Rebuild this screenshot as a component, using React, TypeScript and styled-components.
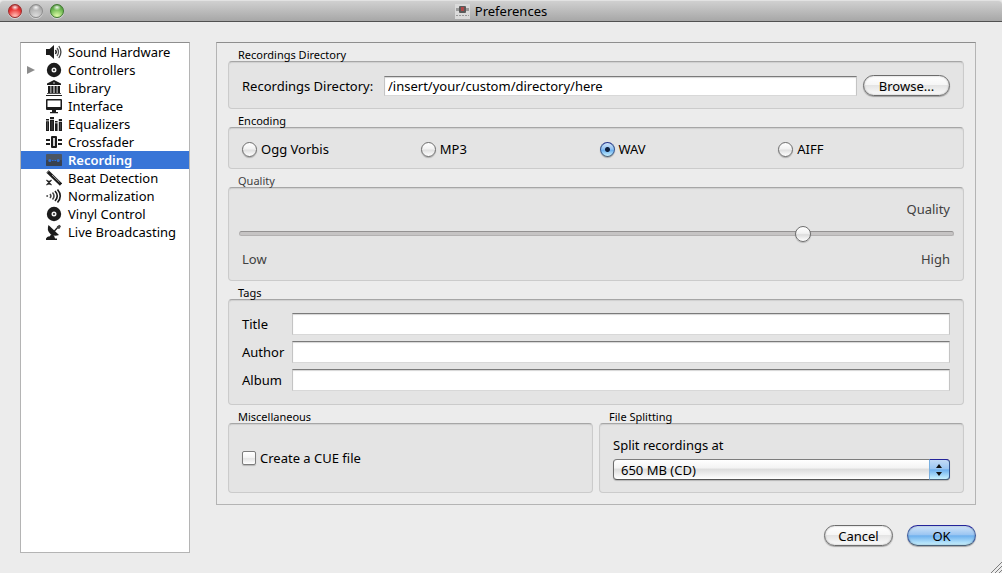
import React, { useState } from "react";
import styled, { createGlobalStyle, css } from "styled-components";

const GlobalStyle = createGlobalStyle`
  *, *::before, *::after { box-sizing: border-box; }
  body {
    margin: 0;
    background: #ececec;
    color: #000;
    font-family: "Lucida Grande", "Noto Sans", "Open Sans", sans-serif;
    font-size: 13px;
    line-height: 18px;
  }
  input, button, select { font: inherit; color: inherit; margin: 0; }
`;

const Window = styled.div`
  position: relative;
  display: flex;
  flex-direction: column;
  min-height: 100vh;
`;

const TitleBar = styled.header`
  display: flex;
  align-items: center;
  height: 22px;
  padding: 0 8px;
  background: linear-gradient(#d0d0d0, #a7a7a7);
  border-top: 1px solid #e2e2e2;
  border-bottom: 1px solid #515151;
  border-radius: 4px 4px 0 0;
`;

const Lights = styled.div`
  display: flex;
  flex: 1;
  gap: 7px;
`;

const Light = styled.button<{ $edge: string; $mid: string; $glow: string }>`
  width: 14px;
  height: 14px;
  padding: 0;
  border: 1px solid ${(p) => p.$edge};
  border-radius: 50%;
  background:
    radial-gradient(ellipse 4px 3px at 50% 20%, rgba(255, 255, 255, 0.9), rgba(255, 255, 255, 0) 100%),
    radial-gradient(circle at 50% 95%, ${(p) => p.$glow} 10%, ${(p) => p.$mid} 60%, ${(p) => p.$edge} 100%);
  box-shadow: 0 1px 0 rgba(255, 255, 255, 0.5);
`;

const Title = styled.h1`
  display: flex;
  align-items: center;
  gap: 5px;
  margin: 0;
  font-size: 13px;
  font-weight: 400;
`;

const Spacer = styled.div`
  flex: 1;
`;

const Body = styled.div`
  display: flex;
  flex: 1;
  gap: 26px;
  padding: 20px 26px 20px 20px;
`;

const Sidebar = styled.nav`
  flex: 0 0 170px;
  background: #fff;
  border: 1px solid #b4b4b4;
  border-top-color: #8e8e8e;
`;

const NavLink = styled.a<{ $active?: boolean }>`
  display: grid;
  grid-template-columns: 18px 16px 1fr;
  align-items: center;
  column-gap: 6px;
  height: 18px;
  padding-left: 1px;
  color: #000;
  text-decoration: none;
  white-space: nowrap;
  ${(p) =>
    p.$active &&
    css`
      background: #3875d7;
      color: #fff;
      font-weight: 600;
    `}
`;

const Disclosure = styled.svg`
  justify-self: center;
`;

const Main = styled.main`
  display: flex;
  flex: 1;
  min-width: 0;
  flex-direction: column;
`;

const Panel = styled.section`
  padding: 6px 11px 11px;
  border: 1px solid #b4b4b4;
  border-top-color: #8e8e8e;
`;

const GroupRow = styled.div`
  display: grid;
  grid-template-columns: 1fr 1fr;
  gap: 6px;
`;

const Group = styled.section<{ $dim?: boolean }>`
  display: flex;
  flex-direction: column;
  margin-bottom: 6px;
  color: ${(p) => (p.$dim ? "#404040" : "#000")};
  ${GroupRow} &, &:last-child { margin-bottom: 0; }
`;

const GroupTitle = styled.h2`
  z-index: 1;
  margin: 0;
  padding-left: 10px;
  font-size: 11px;
  line-height: 12px;
  font-weight: 400;
`;

const GroupBox = styled.div<{ $pad?: string }>`
  flex: 1;
  padding: ${(p) => p.$pad ?? "13px"};
  background: #e4e4e4;
  border: 1px solid #cbcbcb;
  border-top-color: #a6a6a6;
  border-radius: 4px;
  box-shadow: inset 0 1px 1px #cfcfcf;
`;

const DirectoryRow = styled.div`
  display: grid;
  grid-template-columns: 136px 1fr auto;
  align-items: center;
  gap: 6px;
  height: 20px;
  white-space: nowrap;
`;

const TextBox = styled.input`
  min-width: 0;
  width: 100%;
  height: 22px;
  padding: 0 3px;
  border: 1px solid #c4c4c4;
  border-top-color: #7a7a7a;
  border-bottom-color: #d8d8d8;
  border-radius: 0;
  background: #fff;
  box-shadow: inset 0 1px 1px #d5d5d5;
  outline: none;
`;

const DirectoryBox = styled(TextBox)`
  height: 20px;
`;

const PushButton = styled.button<{ $primary?: boolean; $width: number }>`
  width: ${(p) => p.$width}px;
  height: 21px;
  padding: 0;
  line-height: 18px;
  border: 1px solid #6b6b6b;
  border-radius: 11px;
  background: linear-gradient(#fff 0%, #f6f6f6 45%, #e4e4e4 50%, #fbfbfb 100%);
  box-shadow: 0 1px 1px rgba(0, 0, 0, 0.3), inset 0 0 2px rgba(0, 0, 0, 0.3);
  ${(p) =>
    p.$primary &&
    css`
      border-color: #24249a #3c5a9c #4a6078;
      background: linear-gradient(#d2e4f8 0%, #9cc6f2 45%, #6fb1ee 52%, #c9f2ff 100%);
    `}
`;

const RadioGrid = styled.div`
  display: grid;
  grid-template-columns: repeat(4, 1fr);
  gap: 7px;
`;

const Choice = styled.label`
  display: flex;
  align-items: center;
  gap: 4px;
`;

const Radio = styled.input`
  appearance: none;
  width: 15px;
  height: 15px;
  border: 1px solid #6d6d6d;
  border-radius: 50%;
  background: linear-gradient(#fff 0%, #f2f2f2 45%, #e0e0e0 55%, #fff 100%);
  box-shadow: 0 1px 1px rgba(0, 0, 0, 0.25);
  &:checked {
    border-color: #24348c #35558c #4a6078;
    background:
      radial-gradient(circle at 50% 50%, #10203c 0 2px, transparent 3px),
      linear-gradient(#d2e4f8 0%, #8fc0f2 48%, #69aeee 55%, #c9f2ff 100%);
  }
`;

const CheckBox = styled.input`
  appearance: none;
  width: 14px;
  height: 14px;
  border: 1px solid #7c7c7c;
  border-radius: 2px;
  background: linear-gradient(#fff 0%, #f4f4f4 45%, #e4e4e4 55%, #fff 100%);
  box-shadow: 0 1px 1px rgba(0, 0, 0, 0.2);
  &:checked { background: #69aeee; }
`;

const Caption = styled.div<{ $split?: boolean }>`
  display: flex;
  justify-content: ${(p) => (p.$split ? "space-between" : "flex-end")};
  padding: 0 4px 0 3px;
`;

const Slider = styled.input`
  appearance: none;
  display: block;
  width: 100%;
  height: 16px;
  margin: 7px 0 9px;
  background: transparent;
  &::-webkit-slider-runnable-track {
    height: 5px;
    border: 1px solid #b3b1b1;
    border-top-color: #949292;
    border-radius: 3px;
    background: #c6c4c4;
  }
  &::-webkit-slider-thumb {
    appearance: none;
    width: 16px;
    height: 16px;
    margin-top: -6px;
    border: 1px solid #6f6f6f;
    border-radius: 50%;
    background: linear-gradient(#fff 0%, #f2f2f2 45%, #dcdcdc 55%, #fff 100%);
    box-shadow: 0 1px 1px rgba(0, 0, 0, 0.2);
  }
`;

const TagGrid = styled.div`
  display: grid;
  grid-template-columns: 44px 1fr;
  align-items: center;
  gap: 6px;
`;

const CheckArea = styled.div`
  display: flex;
  align-items: center;
  height: 100%;
`;

const SplitField = styled.div`
  display: flex;
  flex-direction: column;
  gap: 5px;
`;

const SelectWrap = styled.div`
  position: relative;
  height: 21px;
`;

const Select = styled.select`
  appearance: none;
  display: block;
  width: 100%;
  height: 21px;
  padding: 0 28px 0 7px;
  border: 1px solid #6b6b6b;
  border-color: #7c7c7c #6b6b6b #555;
  border-radius: 4px;
  background: linear-gradient(#fff 0%, #f4f4f4 40%, #dedede 50%, #fff 100%);
  box-shadow: 0 1px 1px rgba(0, 0, 0, 0.2);
`;

const SelectCap = styled.span`
  position: absolute;
  inset: 0 0 0 auto;
  display: flex;
  align-items: center;
  justify-content: center;
  width: 21px;
  padding-right: 2px;
  border: 1px solid #24249a;
  border-color: #24249a #35558c #4a6078 #7ab0e0;
  border-radius: 0 4px 4px 0;
  background: linear-gradient(#c3dbf6 0%, #9cc6f2 45%, #6fb1ee 52%, #c9f2ff 100%);
  pointer-events: none;
`;

const Footer = styled.footer`
  display: flex;
  justify-content: flex-end;
  gap: 14px;
  padding-top: 20px;
`;

const ResizeGrip = styled.svg`
  position: absolute;
  right: 0;
  bottom: 0;
`;

const Icon = ({ children }: { children: React.ReactNode }) => (
  <svg width="16" height="16" viewBox="0 0 16 16" fill="#1c1c1c" aria-hidden="true">
    {children}
  </svg>
);

const SpeakerIcon = () => (
  <Icon>
    <path d="M0 5h3.5L8 1v14l-4.500-4H0z" />
    <path d="M9.500 6q1.500 2 0 4" fill="none" stroke="#1c1c1c" strokeWidth="1.500" />
    <path d="M11 4q3 4 0 8" fill="none" stroke="#555" strokeWidth="1.300" />
    <path d="M12.800 2q4.200 6 0 12" fill="none" stroke="#444" strokeWidth="1.300" />
  </Icon>
);

const DiscIcon = () => (
  <Icon>
    <circle cx="8" cy="8" r="7.2" />
    <circle cx="8" cy="8" r="1.800" fill="#1c1c1c" stroke="#f4f4f4" strokeWidth="1.400" />
    <circle cx="8" cy="8" r=".6" fill="#999" />
  </Icon>
);

const LibraryIcon = () => (
  <Icon>
    <path d="M8 0l7 3.500V5H1V3.500z" />
    <path d="M2 6h2.500v7H2zM5.300 6h2.200v7H5.300zM8.500 6h2.200v7H8.500zM11.500 6H14v7h-2.500z" />
    <path d="M1 13.200h14v.8H1zM0 15h16v1H0z" />
    <circle cx="8" cy="3" r=".8" fill="#ddd" />
  </Icon>
);

const MonitorIcon = () => (
  <Icon>
    <path fillRule="evenodd" d="M1 1h14q1 0 1 1v9q0 1-1 1H1q-1 0-1-1V2q0-1 1-1zM1.500 2.500V9h13V2.500z" />
    <path d="M6 12h4v2h2v1.200H4V14h2z" />
  </Icon>
);

const EqualizerIcon = () => (
  <Icon>
    <path d="M0 3h3v1.500H0zM0 5.200h3V15H0zM4 1h4v2H4zM4 3.800h4V15H4zM9 5h2.600v1.500H9zM9 7.200h2.600V15H9zM12.800 3H16v2h-3.200zM12.800 5.800H16V15h-3.200z" />
    <path d="M1.500 6v8M6 5v9M14.400 7v7" stroke="#666" strokeWidth=".6" />
  </Icon>
);

const CrossfaderIcon = () => (
  <Icon>
    <path d="M0 5h4v2H0zM0 9h4v2H0zM12 5h4v2h-4zM12 9h4v2h-4z" />
    <path fillRule="evenodd" d="M6 2h4q1 0 1 1v10q0 1-1 1H6q-1 0-1-1V3q0-1 1-1zM7.200 4v8h1.600V4z" />
  </Icon>
);

const CassetteIcon = () => (
  <Icon>
    <rect y="2" width="16" height="12" rx="1" fill="#4a5563" />
    <rect y="8" width="16" height="6" rx="1" fill="#38414e" />
    <circle cx="3.800" cy="8.500" r="1.500" fill="#2f6fd6" />
    <circle cx="12.200" cy="8.500" r="1.500" fill="#2f6fd6" />
    <path d="M6 8.500h4" stroke="#2f6fd6" strokeDasharray="1.600 .8" />
  </Icon>
);

const WandIcon = () => (
  <Icon>
    <path d="M1.500 1.500L15 14.500" stroke="#1c1c1c" strokeWidth="3.200" />
    <path d="M6 5L13.500 12.200" stroke="#aaa" strokeWidth=".9" />
    <path d="M1.200 2.600L2.800 1" stroke="#888" />
    <path d="M.5 10l5 5.200M5.500 10l-5 5.200M3 10.500v4.500" stroke="#1c1c1c" strokeWidth="1.100" />
  </Icon>
);

const WavesIcon = () => (
  <Icon>
    <circle cx="1.200" cy="8" r="1" fill="#555" />
    <path d="M4 6q1.800 2 0 4M6.500 4.500q3 3.500 0 7" fill="none" stroke="#444" strokeWidth="1.500" />
    <path d="M9 3q4.500 5 0 10M11.500 1.500q5.500 6.500 0 13" fill="none" stroke="#1c1c1c" strokeWidth="1.600" />
  </Icon>
);

const DishIcon = () => (
  <Icon>
    <path d="M2.500 1Q.5 6 4 9.500T13 11z" />
    <path d="M8 7.500L13 2" stroke="#1c1c1c" strokeWidth="1.300" />
    <path d="M11.500 4.500L10.800 2.500 13.500.8 15 2.300 13.300 5z" fill="#444" />
    <path d="M5 10l3 1.500 1.200 3.500H0q.5-2.500 4-2.800z" />
    <path d="M0 14.500h11V16H0z" />
  </Icon>
);

const AppIcon = () => (
  <svg width="15" height="15" viewBox="0 0 15 15" aria-hidden="true">
    <rect width="15" height="15" fill="#dadada" />
    <path d="M1 4h3v3H1zM11 4h3v3h-3z" fill="#9a9a9a" />
    <rect x="4" y="2" width="7" height="7" rx="1" fill="#5a5a5a" />
    <rect x="6" y="3" width="3" height="4" fill="#b04848" />
    <path d="M1 11.500h13" stroke="#999" strokeDasharray="2 1" />
  </svg>
);

const pages: { name: string; icon: React.FC; expandable?: boolean }[] = [
  { name: "Sound Hardware", icon: SpeakerIcon },
  { name: "Controllers", icon: DiscIcon, expandable: true },
  { name: "Library", icon: LibraryIcon },
  { name: "Interface", icon: MonitorIcon },
  { name: "Equalizers", icon: EqualizerIcon },
  { name: "Crossfader", icon: CrossfaderIcon },
  { name: "Recording", icon: CassetteIcon },
  { name: "Beat Detection", icon: WandIcon },
  { name: "Normalization", icon: WavesIcon },
  { name: "Vinyl Control", icon: DiscIcon },
  { name: "Live Broadcasting", icon: DishIcon },
];

const encodings = ["Ogg Vorbis", "MP3", "WAV", "AIFF"];
const tags = ["Title", "Author", "Album"];

export default function App() {
  const [encoding, setEncoding] = useState("WAV");

  return (
    <Window>
      <GlobalStyle />
      <TitleBar>
        <Lights>
          <Light aria-label="Close" $edge="#9c2b2b" $mid="#e8302f" $glow="#ffb0a8" />
          <Light aria-label="Minimize" $edge="#8c8c8c" $mid="#b4b4b4" $glow="#d8d8d8" />
          <Light aria-label="Zoom" $edge="#3f7a2f" $mid="#6cb850" $glow="#d4f5a0" />
        </Lights>
        <Title>
          <AppIcon />
          Preferences
        </Title>
        <Spacer />
      </TitleBar>

      <Body>
        <Sidebar>
          {pages.map(({ name, icon: PageIcon, expandable }) => (
            <NavLink key={name} href="#" $active={name === "Recording"}>
              {expandable ? (
                <Disclosure width="8" height="10" viewBox="0 0 8 10">
                  <path d="M0 1l8 4-8 4z" fill="#8c8c8c" />
                </Disclosure>
              ) : (
                <span />
              )}
              <PageIcon />
              {name}
            </NavLink>
          ))}
        </Sidebar>

        <Main>
          <Panel>
            <Group>
              <GroupTitle>Recordings Directory</GroupTitle>
              <GroupBox>
                <DirectoryRow>
                  <label htmlFor="directory">Recordings Directory:</label>
                  <DirectoryBox id="directory" defaultValue="/insert/your/custom/directory/here" />
                  <PushButton $width={87}>Browse...</PushButton>
                </DirectoryRow>
              </GroupBox>
            </Group>

            <Group>
              <GroupTitle>Encoding</GroupTitle>
              <GroupBox $pad="12px 13px 10px">
                <RadioGrid>
                  {encodings.map((name) => (
                    <Choice key={name}>
                      <Radio
                        type="radio"
                        name="encoding"
                        checked={encoding === name}
                        onChange={() => setEncoding(name)}
                      />
                      {name}
                    </Choice>
                  ))}
                </RadioGrid>
              </GroupBox>
            </Group>

            <Group $dim>
              <GroupTitle>Quality</GroupTitle>
              <GroupBox $pad="12px 9px 12px 10px">
                <Caption>
                  <label htmlFor="quality">Quality</label>
                </Caption>
                <Slider id="quality" type="range" min={0} max={128} defaultValue={102} disabled />
                <Caption $split>
                  <span>Low</span>
                  <span>High</span>
                </Caption>
              </GroupBox>
            </Group>

            <Group>
              <GroupTitle>Tags</GroupTitle>
              <GroupBox>
                <TagGrid>
                  {tags.map((tag) => (
                    <React.Fragment key={tag}>
                      <label htmlFor={tag}>{tag}</label>
                      <TextBox id={tag} />
                    </React.Fragment>
                  ))}
                </TagGrid>
              </GroupBox>
            </Group>

            <GroupRow>
              <Group>
                <GroupTitle>Miscellaneous</GroupTitle>
                <GroupBox>
                  <CheckArea>
                    <Choice>
                      <CheckBox type="checkbox" />
                      Create a CUE file
                    </Choice>
                  </CheckArea>
                </GroupBox>
              </Group>
              <Group>
                <GroupTitle>File Splitting</GroupTitle>
                <GroupBox $pad="12px 13px">
                  <SplitField>
                    <label htmlFor="split">Split recordings at</label>
                    <SelectWrap>
                      <Select id="split">
                        <option>650 MB (CD)</option>
                      </Select>
                      <SelectCap>
                        <svg width="6" height="12" viewBox="0 0 6 12">
                          <path d="M3 0l3 4H0zM0 8h6l-3 4z" fill="#111" />
                        </svg>
                      </SelectCap>
                    </SelectWrap>
                  </SplitField>
                </GroupBox>
              </Group>
            </GroupRow>
          </Panel>

          <Footer>
            <PushButton $width={69}>Cancel</PushButton>
            <PushButton $width={69} $primary>
              OK
            </PushButton>
          </Footer>
        </Main>
      </Body>

      <ResizeGrip width="12" height="12" viewBox="0 0 12 12" aria-hidden="true">
        <path d="M1 12L12 1M5 12l7-7M9 12l3-3" stroke="#7d7d7d" strokeWidth="1" />
      </ResizeGrip>
    </Window>
  );
}
